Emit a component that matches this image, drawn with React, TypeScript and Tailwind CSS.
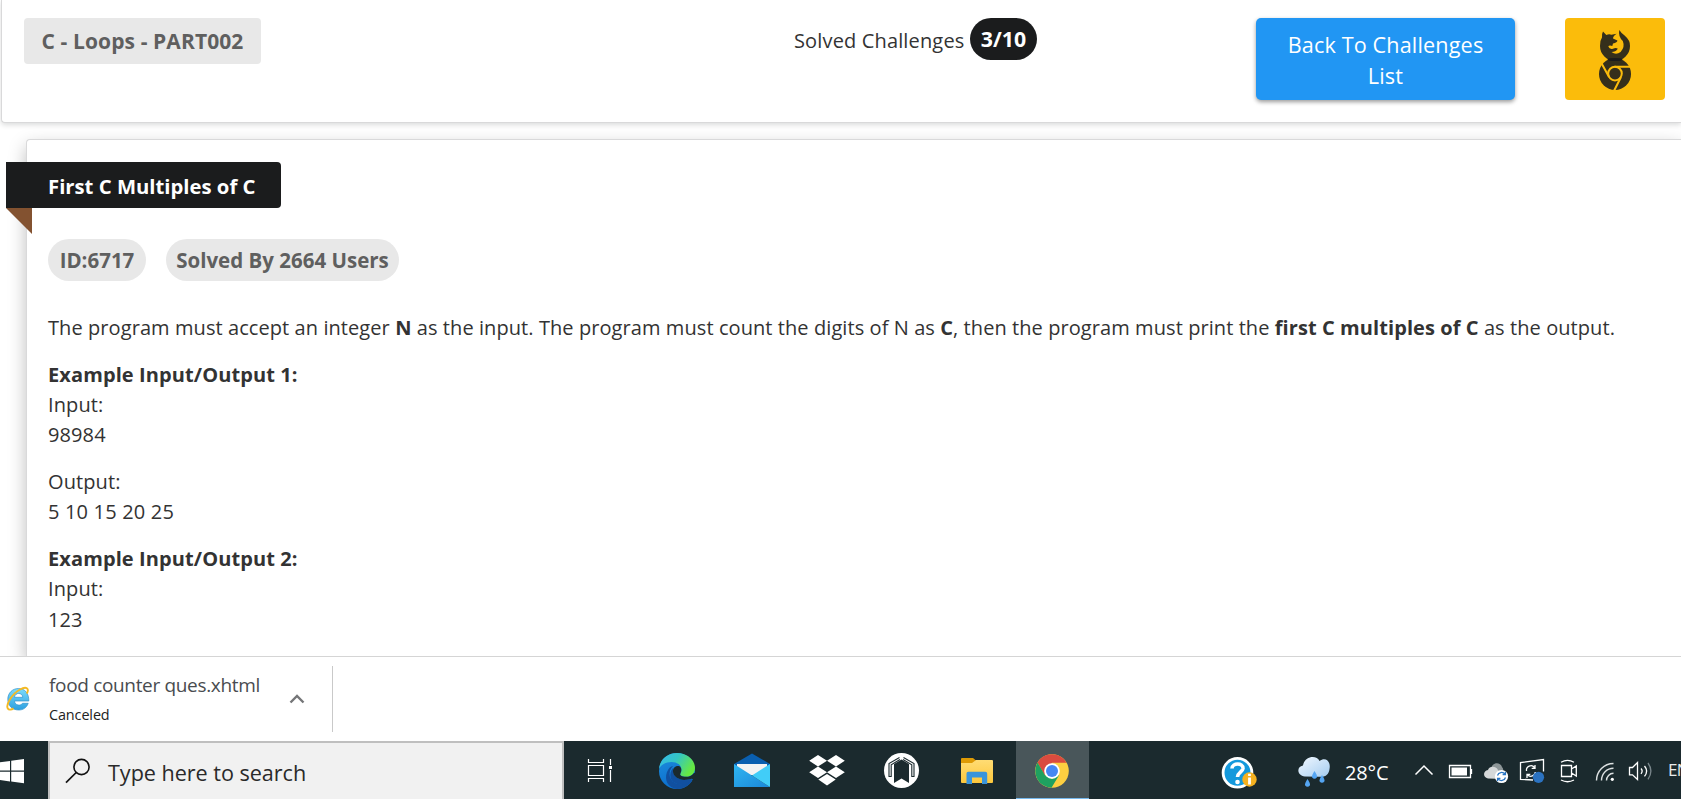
import type { ReactNode } from "react";

function Tile({ x, w, children }: { x: number; w: number; children?: ReactNode }) {
  return (
    <svg width={w} height={58} viewBox={`${x} 741 ${w} 58`} fill="none" className="block shrink-0">
      {children}
    </svg>
  );
}

function BrowserBadge() {
  return (
    <svg width="34" height="62" viewBox="1598 30 34 62" fill="none">
      <path
        d="M1603 32.5L1606.3 36Q1609 34.8 1611.5 35.8L1616.6 34.8Q1612.8 37.4 1613 39.6L1617.4 41.4Q1617.4 43.4 1613 44.6L1612.3 47Q1609 46 1608.3 47.6Q1609.6 50.8 1613 49.8Q1616 48.2 1617.8 49.8Q1615.6 53 1611.5 53Q1616 56.4 1620.6 53Q1625.2 48 1622.8 42Q1618 37.5 1619.3 31Q1621.5 34.5 1624.6 36.5Q1630.4 41.5 1630 47A15 14.7 0 0 1 1600 47Q1599.6 42 1602 38.5Q1601.5 35 1603 32.5Z"
        fill="#352f1b"
      />
      <circle cx="1615" cy="75" r="16" fill="#352f1b" />
      <circle cx="1615" cy="74.6" r="6.8" stroke="#fbbc0b" strokeWidth="2" />
      <path d="M1614.5 67.8H1631 M1609.2 78.3L1601.5 64.2 M1621 78L1614.2 91.5" stroke="#fbbc0b" strokeWidth="2" />
      <ellipse cx="1615" cy="60.5" rx="7.5" ry="1.6" fill="#1b1c1d" />
    </svg>
  );
}

function Header() {
  return (
    <header className="relative ml-[1px] h-[123px] shrink-0 rounded-bl-[4px] border-b border-l border-[#d9d9da] bg-white shadow-[0_2px_5px_rgba(34,36,38,0.16)]">
      <div className="flex items-start pt-[18px]">
        <div className="ml-[22px] flex h-[46px] w-[237px] items-center justify-center rounded-[4px] bg-[#e8e8e8] pt-[2px] text-[21px] font-bold tracking-[0.1px] whitespace-nowrap text-[#5f5f5f]">
          C - Loops - PART002
        </div>
        <div className="ml-[533px] flex w-[243px] items-center">
          <span className="w-[176px] pt-[3px] text-[20px] font-[370] tracking-[0.15px] whitespace-nowrap">Solved Challenges</span>
          <span className="flex h-[42px] w-[67px] items-center justify-center rounded-full bg-[#1b1c1d] text-[21.3px] font-bold text-white">
            3/10
          </span>
        </div>
        <button className="ml-[219px] h-[82px] w-[259px] rounded-[5px] bg-[#2196f3] px-6 pt-px text-[21.6px] leading-[31px] font-[370] tracking-[0.15px] text-white shadow-[0_2px_4px_rgba(0,0,0,0.4)]">
          Back To Challenges List
        </button>
        <div className="ml-[50px] flex h-[82px] w-[100px] items-center justify-center rounded-[4px] bg-[#fbbc0b] pt-[2px]">
          <BrowserBadge />
        </div>
      </div>
    </header>
  );
}

function Challenge() {
  return (
    <main className="ml-[26px] mt-[16px] min-h-0 grow rounded-tl-[4px] border-t border-l border-[#d9d9da] bg-white shadow-[0_7px_18px_rgba(0,0,0,0.26)]">
      <div className="relative mt-[22px] -ml-[21px] flex h-[46px] w-[275px] items-center rounded-r-[4px] bg-[#1b1c1d] pt-[2px] pl-[42px] text-[20.3px] font-bold whitespace-nowrap text-white">
        First C Multiples of C
        <svg width="26" height="26" className="absolute top-[46px] left-0">
          <path d="M0 0H26V26Z" fill="#835230" />
        </svg>
      </div>
      <div className="mt-[31px] ml-[21px] flex gap-[20px] text-[20.5px] font-bold whitespace-nowrap text-[#5f5f5f]">
        <span className="flex h-[42px] w-[98px] items-center justify-center rounded-full bg-[#e8e8e8]">ID:6717</span>
        <span className="flex h-[42px] w-[233px] items-center justify-center rounded-full bg-[#e8e8e8]">
          Solved By 2664 Users
        </span>
      </div>
      <div className="mt-[32px] ml-[21px] flex flex-col gap-[16.4px] text-[20px] leading-[30.3px] font-[370] tracking-[0.1px] whitespace-nowrap">
        <p className="tracking-[0.078px]">
          The program must accept an integer <b>N</b> as the input. The program must count the digits of N as <b>C</b>,
          then the program must print the <b>first C multiples of C</b> as the output.
        </p>
        <p>
          <b>Example Input/Output 1:</b>
          <br />
          Input:
          <br />
          98984
        </p>
        <p>
          Output:
          <br />
          <span className="tracking-[0.18px]">5 10 15 20 25</span>
        </p>
        <p>
          <b>Example Input/Output 2:</b>
          <br />
          Input:
          <br />
          123
        </p>
      </div>
    </main>
  );
}

function DownloadBar() {
  return (
    <section className="relative flex h-[85px] shrink-0 items-center border-t border-[#d5d5d5] bg-white">
      <svg width="24" height="26" viewBox="6 685 24 26" fill="none" className="ml-[6px]">
        <defs>
          <linearGradient id="ie" x1="0" y1="0" x2="0" y2="1">
            <stop stopColor="#7ddcfb" />
            <stop offset="1" stopColor="#2b9fe0" />
          </linearGradient>
        </defs>
        <path
          fillRule="evenodd"
          d="M18.5 687.5C24.5 687.5 29 692 28.8 700H14.5C15 705 21 705 22.5 702.3H28.2C26.5 707 23 709 18.8 709C12 709 7.8 704.5 7.8 698.3C7.8 692 12.5 687.5 18.5 687.5ZM14.5 696.3H22.8C22.5 691.3 15 691 14.5 696.3Z"
          fill="url(#ie)"
          stroke="#3292cc"
          strokeWidth=".7"
        />
        <path d="M26.8 692.5C29.5 687.5 26.5 684.8 20 688.5C12 693 5.5 703.5 7.8 707.5C9 709.5 11.8 708.5 13.5 707.4" stroke="#f5b922" strokeWidth="1.9" />
      </svg>
      <div className="ml-[19px] w-[240px] whitespace-nowrap">
        <div className="h-[30px] text-[19px] leading-[30px] font-[370] tracking-[-0.33px] text-[#494c50]">
          food counter ques.xhtml
        </div>
        <div className="h-[28px] text-[14.4px] leading-[29px] font-[370] tracking-[-0.1px] text-[#222]">Canceled</div>
      </div>
      <svg width="16" height="10" viewBox="0 0 16 10" fill="none">
        <path d="M1.5 8.5L8 2L14.5 8.5" stroke="#757678" strokeWidth="2.4" />
      </svg>
      <div className="ml-[27px] h-[66px] w-px bg-[#c9c9c9]" />
    </section>
  );
}

function Taskbar() {
  return (
    <footer className="flex h-[58px] shrink-0 overflow-hidden bg-[#1b2a2e] text-white">
      <Tile x={0} w={48}>
        <path d="M0 762.3L10 761V770.5H0ZM11.2 760.8L24 759V770.5H11.2ZM0 771.7H10V781.5L0 780ZM11.2 771.7H24V783.3L11.2 781.6Z" fill="#fff" />
      </Tile>
      <div className="flex w-[516px] shrink-0 border-2 border-b-0 border-[#bfbfbf] bg-[#f1f1f1]">
        <Tile x={50} w={58}>
          <circle cx="81.5" cy="765" r="7.6" stroke="#111" strokeWidth="1.6" />
          <path d="M76.2 770.5L66 780.6" stroke="#111" strokeWidth="1.7" />
        </Tile>
        <span className="pt-[13px] text-[21.6px] leading-[34px] font-[370] tracking-[-0.03px] text-[#2a2a2a]">Type here to search</span>
      </div>
      <Tile x={564} w={72}>
        <g stroke="#fff" strokeWidth="1.2">
          <path d="M588.5 759V762.5H603.5V759M588.5 782V778.5H603.5V782M588.5 765.5H603.5V775.5H588.5ZM610.5 759V765M610.5 770V782" />
        </g>
        <path d="M609 766H612V769H609Z" fill="#fff" />
      </Tile>
      <Tile x={636} w={76}>
        <defs>
          <linearGradient id="edgeTop" x1="0" y1="0" x2="1" y2=".45">
            <stop stopColor="#35b8ee" />
            <stop offset=".5" stopColor="#34c5c4" />
            <stop offset="1" stopColor="#66e843" />
          </linearGradient>
          <linearGradient id="edgeBody" x1="0" y1="0" x2=".4" y2="1">
            <stop stopColor="#1f8fde" />
            <stop offset="1" stopColor="#0a6dcc" />
          </linearGradient>
        </defs>
        <circle cx="677" cy="771" r="18" fill="url(#edgeBody)" />
        <path d="M673 766C667 772 669 782 678 784C684 785.5 689 783 692.5 780C689 786 683 789 677 789C668 788 664 780 667 772C668.5 768 671 766 673 766Z" fill="#1150a0" />
        <path d="M673 772C673.6 777 680 780.5 686 779.8C690 779.5 691.5 778.5 692.6 779.8C689 784.5 684 785.8 678 784.3C670 782.5 668 774 673 768Z" fill="#1150a0" />
        <path d="M659 769C660 759 667.5 753 677 753C688 753 695 760.5 695 768C695 773.5 691 776.8 686 776.8C681.5 776.8 679.4 775.2 680.4 773.4C683.5 768.5 680 762 671.5 762C665 762 660.3 765.5 659 769Z" fill="url(#edgeTop)" />
        <path d="M680.4 773.4C682 770.5 681.4 767.5 679.5 766.2C675.5 765.3 672.5 768.2 673 772C673.6 777 680 780.5 686 779.8C690 779.5 692 778 693 779.4L692 781L697 780V773L694 773C692 776 689 776.8 686 776.8C681.5 776.8 679.4 775.2 680.4 773.4Z" fill="#1b2a2e" />
      </Tile>
      <Tile x={712} w={76}>
        <defs>
          <linearGradient id="mail" x1="0" y1="0" x2="1" y2="1">
            <stop stopColor="#2fb6f2" />
            <stop offset="1" stopColor="#1b87d8" />
          </linearGradient>
        </defs>
        <path d="M734 764L752 753.5L770 764V770H734Z" fill="#0a5fb0" />
        <path d="M737 764H767V775H737Z" fill="#f3f3f3" />
        <path d="M734 764L752 775.5L770 787H734Z" fill="url(#mail)" />
        <path d="M770 764L752 775.5L770 787Z" fill="#41cdf8" />
      </Tile>
      <Tile x={788} w={76}>
        <path
          d="M818 755L827 760.8L818 766.5L809.2 760.8ZM836 755L844.8 760.8L836 766.5L827 760.8ZM818 766.5L827 772.3L818 778L809.2 772.3ZM836 766.5L844.8 772.3L836 778L827 772.3ZM827 774L835.7 779.6L827 785.4L818.3 779.6Z"
          fill="#fff"
        />
      </Tile>
      <Tile x={864} w={74}>
        <circle cx="901.5" cy="770.5" r="17.5" fill="#fff" />
        <path d="M901.5 759.5L909 764V783L901.5 778.5L894 783V764Z" fill="#1b2a2e" />
        <path d="M899.5 757.5L889 763.5V776.5H891.2V764.8L900 759.5M903.5 757.5L914 763.5V776.5H911.8V764.8L903 759.5" stroke="#1b2a2e" strokeWidth="1.1" />
      </Tile>
      <Tile x={938} w={78}>
        <defs>
          <linearGradient id="folder" x1="0" y1="0" x2="0" y2="1">
            <stop stopColor="#ffdc74" />
            <stop offset="1" stopColor="#fdc73b" />
          </linearGradient>
        </defs>
        <path d="M961 759Q961 758 962 758H973L976 760.5V764H961Z" fill="#de9a05" />
        <path d="M961 763H972L976 760H992Q993 760 993 761V782Q993 783 992 783H962Q961 783 961 782Z" fill="url(#folder)" />
        <path d="M966.5 784V773.5Q966.5 771.7 968.3 771.7H985.3Q987.2 771.7 987.2 773.5V784H982V777.5H972V784Z" fill="#3a94db" />
      </Tile>
      <div className="h-[58px] w-[73px] shrink-0 border-b border-[#76b9ed] bg-[#49565a]">
        <Tile x={1016} w={73}>
          <circle cx="1052" cy="771" r="16.8" fill="#fdcf41" />
          <path d="M1037.5 762.6A16.8 16.8 0 0 1 1066.6 762.8H1052L1044.5 775Z" fill="#da4b3f" />
          <path d="M1037.5 762.6A16.8 16.8 0 0 0 1051.5 787.8L1059.2 775L1052 779L1044.8 775Z" fill="#1fa160" />
          <circle cx="1052" cy="771" r="7.8" fill="#fff" />
          <circle cx="1052" cy="771" r="6" fill="#4587f3" />
        </Tile>
      </div>
      <div className="grow" />
      <Tile x={1215} w={130}>
        <circle cx="1237.5" cy="772.8" r="14.4" fill="#1499dc" stroke="#fff" strokeWidth="2.8" />
        <path d="M1232 768.5C1232 762.5 1243.5 762.5 1243 768.5C1242.5 772 1237.5 772.5 1237.5 777" stroke="#fff" strokeWidth="3.6" />
        <circle cx="1237.5" cy="782" r="2.3" fill="#fff" />
        <circle cx="1249.5" cy="779.5" r="7.2" fill="#f5b120" />
        <path d="M1249.5 777.5V784.5M1249.5 773.8V776" stroke="#fff" strokeWidth="2.8" />
        <defs>
          <linearGradient id="cloud" x1="0" y1="0" x2="1" y2="1">
            <stop stopColor="#f2f8ff" />
            <stop offset="1" stopColor="#a5cdf0" />
          </linearGradient>
        </defs>
        <path d="M1305 776.5C1296.5 775.5 1296.5 766.5 1303 765.5C1304.5 755.5 1317 754.5 1319.5 761C1326 756.5 1331 762 1329.5 769C1329 774.5 1325 777.5 1320 776.8Z" fill="url(#cloud)" />
        <g fill="#55a5f2">
          <path d="M1307.5 779Q1310.5 783.5 1310 785.3Q1307.5 788.3 1305 785.3Q1304.6 783.5 1307.5 779ZM1314.5 771Q1317.5 775.5 1317 777.3Q1314.5 780.3 1312 777.3Q1311.6 775.5 1314.5 771ZM1322 775Q1325 779.5 1324.5 781.3Q1322 784.3 1319.5 781.3Q1319.1 779.5 1322 775Z" />
        </g>
      </Tile>
      <span className="w-[60px] pt-[15px] text-[20px] leading-[34px] font-[370] tracking-[-0.15px] whitespace-nowrap">28°C</span>
      <Tile x={1405} w={263}>
        <g stroke="#fff" strokeWidth="1.3">
          <path d="M1415.5 774.5L1424 766L1432.5 774.5" strokeWidth="1.5" />
          <path d="M1449.5 765.5H1470.5V777.5H1449.5Z" />
          <path d="M1471.5 769V774" />
        </g>
        <path d="M1451.5 767.5H1467V775.5H1451.5Z" fill="#fff" />
        <path d="M1491 772C1490 762 1500 761 1502 767Q1504 768.5 1503 774H1491Z" fill="#8d9698" />
        <path d="M1488 778.5C1482.5 777.5 1483 770.5 1488 770C1489.5 765.5 1496 766 1498 770L1501 776L1496 778.7Z" fill="#d5d8d9" />
        <circle cx="1501.5" cy="776.5" r="6.6" fill="#fff" />
        <path d="M1497.5 775.5A4.2 4.2 0 0 1 1505 774.3M1505.5 777.5A4.2 4.2 0 0 1 1498 778.7M1505.4 771.8V774.6H1502.6M1497.6 781.2V778.4H1500.4" stroke="#2875c4" strokeWidth="1.3" />
        <g stroke="#fff" strokeWidth="1.3">
          <path d="M1533 780L1520.5 779.3V762.5L1543.5 759.5V771.5" />
          <path d="M1526.5 771A4.5 4.5 0 0 1 1534.5 767.5M1535.3 772A4.5 4.5 0 0 1 1527.5 774.8M1535 765V768.3H1531.7M1527 778V774.3H1530.3" />
          <path d="M1561.5 765.5H1571.5V776.5H1561.5ZM1571.5 769L1576.3 766V776L1571.5 773" />
          <path d="M1561 762.3Q1567.5 758.5 1574 762.3M1561 780Q1567.5 783.5 1574 780" />
        </g>
        <circle cx="1538.5" cy="777.3" r="5.6" fill="#2b72c0" />
        <g stroke="#dce0e1" strokeWidth="1.4">
          <path d="M1596.5 780.5C1596.5 771 1604 763.5 1613.5 763.5M1601.5 780.5C1601.5 773.5 1607 768.3 1613.5 768.3M1606.5 780.5C1606.5 776.5 1609.5 773.3 1613.5 773.3" />
        </g>
        <circle cx="1612.3" cy="779.3" r="1.6" fill="#fff" />
        <path d="M1629.5 767.5H1632.5L1637.5 762.5V779.5L1632.5 774.8H1629.5Z" stroke="#fff" strokeWidth="1.3" />
        <path d="M1641 768.5Q1643.3 771 1641 773.8M1644.5 766Q1648.8 771 1644.5 776.3" stroke="#fff" strokeWidth="1.3" />
        <path d="M1648 763Q1653.8 771 1648 779.3" stroke="#78858a" strokeWidth="1.3" />
      </Tile>
      <span className="w-[13px] shrink-0 overflow-hidden pt-[12px] text-[17px] leading-[34px] tracking-[-0.8px] text-[#e8ebec]">EN</span>
    </footer>
  );
}

export default function App() {
  return (
    <div className="flex h-[799px] w-[1681px] flex-col overflow-hidden bg-white font-['Open_Sans',sans-serif] text-[#333]">
      <div className="flex min-h-0 grow flex-col overflow-hidden">
        <Header />
        <Challenge />
      </div>
      <DownloadBar />
      <Taskbar />
    </div>
  );
}
